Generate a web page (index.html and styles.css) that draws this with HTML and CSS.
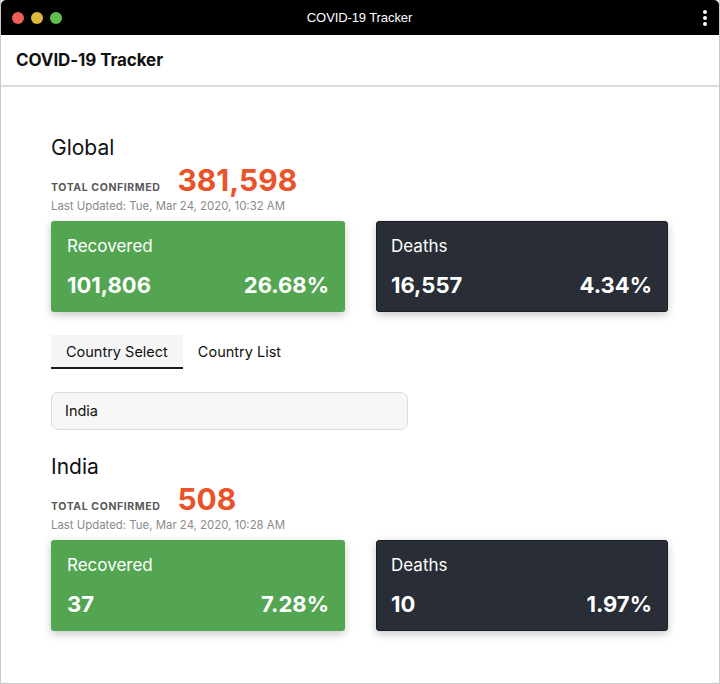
FILE: index.html
```html
<!DOCTYPE html>
<html>
<head>
<meta charset="utf-8">
<link rel="stylesheet" href="styles.css">
</head>
<body>
<div class="window">
  <div class="titlebar">
    <div class="lights">
      <span class="light red"></span>
      <span class="light yellow"></span>
      <span class="light green"></span>
    </div>
    <div class="wintitle">COVID-19 Tracker</div>
    <div class="kebab"><span></span><span></span><span></span></div>
  </div>
  <header class="appbar">COVID-19 Tracker</header>
  <main class="content">
    <section class="stats">
      <h2 class="region">Global</h2>
      <div class="confirmed">
        <span class="conf-label">TOTAL CONFIRMED</span>
        <span class="conf-value">381,598</span>
      </div>
      <div class="updated">Last Updated: Tue, Mar 24, 2020, 10:32 AM</div>
      <div class="cards">
        <div class="card recovered">
          <div class="card-title">Recovered</div>
          <div class="card-row"><span>101,806</span><span>26.68%</span></div>
        </div>
        <div class="card deaths">
          <div class="card-title">Deaths</div>
          <div class="card-row"><span>16,557</span><span>4.34%</span></div>
        </div>
      </div>
    </section>

    <nav class="tabs">
      <div class="tab active">Country Select</div>
      <div class="tab">Country List</div>
    </nav>

    <div class="select">India</div>

    <section class="stats">
      <h2 class="region">India</h2>
      <div class="confirmed">
        <span class="conf-label">TOTAL CONFIRMED</span>
        <span class="conf-value">508</span>
      </div>
      <div class="updated">Last Updated: Tue, Mar 24, 2020, 10:28 AM</div>
      <div class="cards">
        <div class="card recovered">
          <div class="card-title">Recovered</div>
          <div class="card-row"><span>37</span><span>7.28%</span></div>
        </div>
        <div class="card deaths">
          <div class="card-title">Deaths</div>
          <div class="card-row"><span>10</span><span>1.97%</span></div>
        </div>
      </div>
    </section>
  </main>
</div>
</body>
</html>
```

FILE: styles.css
```css
* { box-sizing: border-box; }
html, body { margin: 0; padding: 0; background: #fff; }
body {
  font-family: Inter, "Noto Sans", "Liberation Sans", sans-serif;
  color: #111;
  width: 720px;
  height: 684px;
  overflow: hidden;
}
.window {
  width: 720px;
  height: 684px;
  border-left: 1px solid #c9c9c9;
  border-right: 1px solid #c9c9c9;
  border-bottom: 1px solid #c9c9c9;
  display: flex;
  flex-direction: column;
}
.titlebar {
  height: 35px;
  background: #000;
  display: flex;
  align-items: center;
  justify-content: space-between;
  padding: 0 12px 0 11px;
  border-radius: 5px 5px 0 0;
}
.lights { display: flex; gap: 7px; width: 60px; }
.light { width: 12px; height: 12px; border-radius: 50%; display: block; }
.light.red { background: #ed5f58; }
.light.yellow { background: #e0b73f; }
.light.green { background: #5fc04c; }
.wintitle {
  color: #fff;
  font-family: "Liberation Sans", Arial, sans-serif;
  font-size: 13px;
  font-weight: 400;
  letter-spacing: -0.1px;
}
.kebab { width: 60px; display: flex; flex-direction: column; align-items: flex-end; gap: 2px; }
.kebab span { width: 4px; height: 4px; border-radius: 50%; background: #fff; display: block; }

.appbar {
  height: 52px;
  display: flex;
  align-items: center;
  padding-left: 15px;
  font-size: 17px;
  font-weight: 700;
  color: #111;
  border-bottom: 2px solid #dcdcdc;
  letter-spacing: -0.1px;
}

.content {
  padding: 48px 52px 0 50px;
}
.region {
  margin: 0;
  font-size: 21px;
  font-weight: 400;
  line-height: 26px;
  color: #111;
}
.confirmed {
  display: flex;
  align-items: baseline;
  gap: 17px;
  margin-top: 2px;
  height: 34px;
}
.conf-label {
  font-size: 10.5px;
  font-weight: 700;
  color: #585858;
  letter-spacing: 0.6px;
}
.conf-value {
  font-size: 30px;
  font-weight: 700;
  color: #ea5329;
  line-height: 34px;
}
.updated {
  font-size: 11.4px;
  color: #8a8a8a;
  margin-top: 2px;
  line-height: 14px;
}
.cards {
  display: grid;
  grid-template-columns: 294px 292px;
  gap: 31px;
  margin-top: 8px;
}
.card {
  height: 91px;
  border-radius: 3px;
  color: #fff;
  padding: 14px 16px 0 16px;
  box-shadow: 0 3px 8px rgba(0,0,0,0.22);
}
.card.recovered { background: #53a552; }
.card.deaths { background: #282d36; border: 1px solid #1a1d22; padding: 13px 15px 0 14px; }
.card-title {
  font-size: 17px;
  line-height: 22px;
  font-weight: 400;
}
.card-row {
  display: flex;
  justify-content: space-between;
  font-size: 22px;
  font-weight: 700;
  margin-top: 15px;
  line-height: 26px;
}

.tabs {
  display: flex;
  margin-top: 23px;
}
.tab {
  height: 34px;
  padding: 0 15px;
  font-size: 14.5px;
  line-height: 34px;
  color: #111;
}
.tab.active {
  background: #f5f5f5;
  border-bottom: 2px solid #1c1c1c;
  line-height: 33px;
}

.select {
  margin-top: 23px;
  width: 357px;
  height: 38px;
  background: #f7f7f7;
  border: 1px solid #dcdcdc;
  border-radius: 7px;
  padding-left: 13px;
  font-size: 14.5px;
  line-height: 36px;
  color: #111;
}
.select + .stats { margin-top: 24px; }
```
